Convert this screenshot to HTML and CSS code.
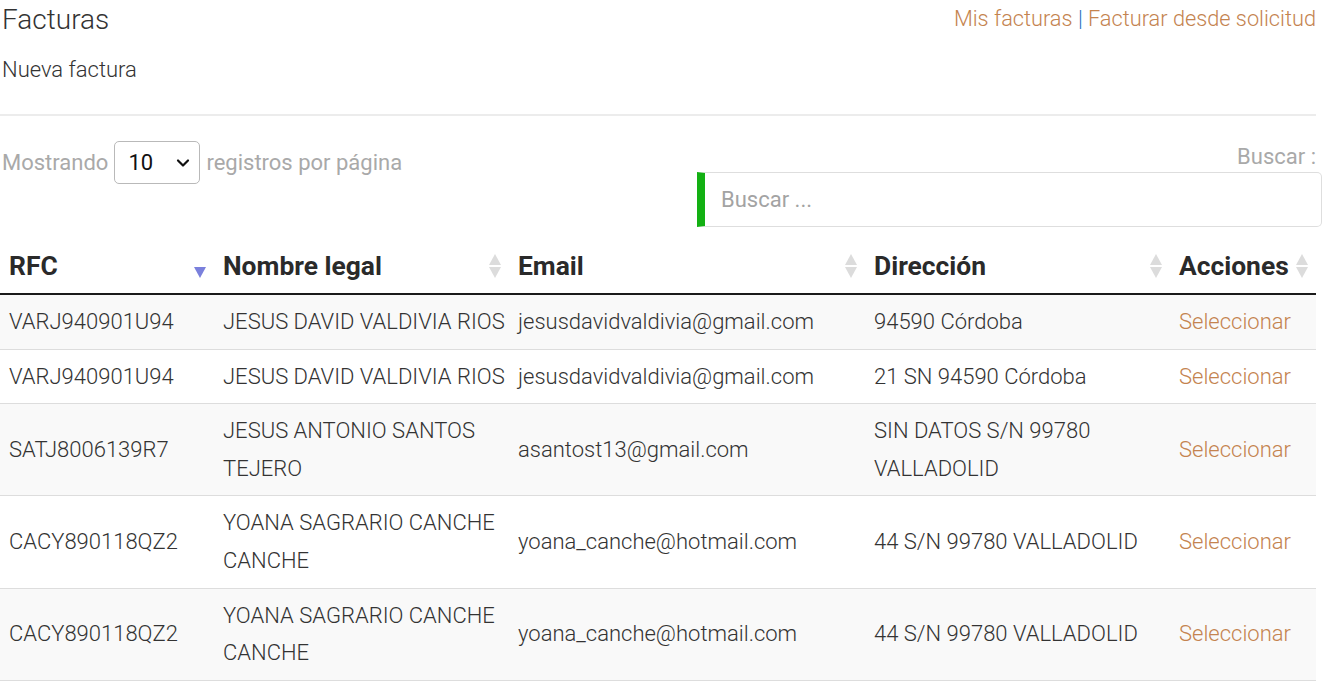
FILE: index.html
```html
<!DOCTYPE html>
<html lang="es">
<head>
<meta charset="utf-8">
<title>Facturas</title>
<link rel="stylesheet" href="styles.css">
</head>
<body>
<div class="page">
  <div class="top">
    <h1 class="title">Facturas</h1>
    <div class="links"><a class="link" href="#">Mis facturas</a> <span class="sep">|</span> <a class="link" href="#">Facturar desde solicitud</a></div>
  </div>
  <div class="sub">Nueva factura</div>
  <hr class="rule">
  <div class="controls">
    <div class="length">Mostrando <span class="select"><span class="select-val">10</span><svg class="chev" width="14" height="10" viewBox="0 0 14 10"><path d="M2 2.5 L7 7.5 L12 2.5" fill="none" stroke="#111" stroke-width="2.2" stroke-linecap="round" stroke-linejoin="round"/></svg></span> registros por página</div>
    <div class="search">
      <label class="search-label" for="q">Buscar :</label>
      <input class="search-input" id="q" type="text" placeholder="Buscar ...">
    </div>
  </div>
  <table class="grid">
    <colgroup>
      <col class="c1"><col class="c2"><col class="c3"><col class="c4"><col class="c5">
    </colgroup>
    <thead>
      <tr>
        <th class="sorted">RFC<span class="arrows"><span class="up"></span><span class="down"></span></span></th>
        <th>Nombre legal<span class="arrows"><span class="up"></span><span class="down"></span></span></th>
        <th>Email<span class="arrows"><span class="up"></span><span class="down"></span></span></th>
        <th>Dirección<span class="arrows"><span class="up"></span><span class="down"></span></span></th>
        <th class="last">Acciones<span class="arrows"><span class="up"></span><span class="down"></span></span></th>
      </tr>
    </thead>
    <tbody>
      <tr>
        <td>VARJ940901U94</td>
        <td>JESUS DAVID VALDIVIA RIOS</td>
        <td>jesusdavidvaldivia@gmail.com</td>
        <td>94590 Córdoba</td>
        <td><a class="link" href="#">Seleccionar</a></td>
      </tr>
      <tr>
        <td>VARJ940901U94</td>
        <td>JESUS DAVID VALDIVIA RIOS</td>
        <td>jesusdavidvaldivia@gmail.com</td>
        <td>21 SN 94590 Córdoba</td>
        <td><a class="link" href="#">Seleccionar</a></td>
      </tr>
      <tr>
        <td>SATJ8006139R7</td>
        <td>JESUS ANTONIO SANTOS TEJERO</td>
        <td>asantost13@gmail.com</td>
        <td>SIN DATOS S/N 99780 VALLADOLID</td>
        <td><a class="link" href="#">Seleccionar</a></td>
      </tr>
      <tr>
        <td>CACY890118QZ2</td>
        <td>YOANA SAGRARIO CANCHE CANCHE</td>
        <td>yoana_canche@hotmail.com</td>
        <td>44 S/N 99780 VALLADOLID</td>
        <td><a class="link" href="#">Seleccionar</a></td>
      </tr>
      <tr>
        <td>CACY890118QZ2</td>
        <td>YOANA SAGRARIO CANCHE CANCHE</td>
        <td>yoana_canche@hotmail.com</td>
        <td>44 S/N 99780 VALLADOLID</td>
        <td><a class="link" href="#">Seleccionar</a></td>
      </tr>
    </tbody>
  </table>
</div>
</body>
</html>
```
FILE: styles.css
```css
html, body {
  margin: 0;
  padding: 0;
  background: #fff;
}
body {
  font-family: Roboto, "Liberation Sans", Arial, sans-serif;
  color: #333;
  overflow: hidden;
}
.page {
  width: 1316px;
}
.top {
  display: flex;
  justify-content: space-between;
  align-items: flex-start;
  padding-left: 2px;
}
.title {
  margin: 0;
  font-size: 28px;
  font-weight: 300;
  line-height: 39px;
  color: #333;
}
.links {
  padding-top: 6px;
  font-size: 21.75px;
  font-weight: 300;
  line-height: 25px;
}
.link {
  color: #c4834f;
  text-decoration: none;
  font-weight: 300;
}
.sep {
  color: #1f6fbf;
}
.sub {
  margin-top: 18px;
  padding-left: 2px;
  font-size: 22px;
  font-weight: 300;
  line-height: 26px;
}
.rule {
  margin: 31px 0 0;
  border: 0;
  border-top: 2px solid #ececec;
  height: 0;
}
.controls {
  margin-top: 25px;
  padding-left: 2px;
  display: flex;
  justify-content: space-between;
  align-items: flex-start;
}
.length {
  display: flex;
  align-items: center;
  gap: 6px;
  font-size: 22px;
  color: #a9a9a9;
  height: 43px;
}
.select {
  box-sizing: border-box;
  width: 86px;
  height: 43px;
  border: 1px solid #b9b9b9;
  border-radius: 5px;
  display: flex;
  align-items: center;
  justify-content: space-between;
  padding: 0 9px 0 13px;
  color: #111;
  font-size: 22px;
  font-weight: 400;
}
.chev {
  display: block;
}
.search {
  display: flex;
  flex-direction: column;
  align-items: flex-end;
  margin-top: 3px;
  margin-right: -6px;
}
.search-label {
  font-size: 22px;
  line-height: 26px;
  color: #a9a9a9;
  margin-right: 6px;
  margin-bottom: 2px;
}
.search-input {
  box-sizing: border-box;
  width: 625px;
  height: 55px;
  border: 1px solid #dedede;
  border-left: 8px solid #13b013;
  border-radius: 0 5px 5px 0;
  padding: 0 0 0 16px;
  font-family: Roboto, "Liberation Sans", Arial, sans-serif;
  font-size: 22px;
  color: #333;
  outline: none;
  background: #fff;
}
.search-input::placeholder {
  color: #a3a3a3;
}
.grid {
  margin-top: 5px;
  width: 1316px;
  border-collapse: collapse;
  table-layout: fixed;
}
.c1 { width: 214px; }
.c2 { width: 295px; }
.c3 { width: 356px; }
.c4 { width: 305px; }
.c5 { width: 146px; }
.grid th {
  position: relative;
  text-align: left;
  font-size: 26.4px;
  font-weight: 700;
  color: #2a2a2a;
  line-height: 44px;
  padding: 12px 24px 5px 9px;
  border-bottom: 2px solid #1a1a1a;
  white-space: nowrap;
}
.grid th.last {
  padding-right: 0;
}
.arrows {
  position: absolute;
  right: 8px;
  top: 22px;
  width: 12px;
  display: flex;
  flex-direction: column;
  gap: 2px;
}
.up {
  width: 0;
  height: 0;
  border-left: 6px solid transparent;
  border-right: 6px solid transparent;
  border-bottom: 11px solid #dcdcdc;
}
.down {
  width: 0;
  height: 0;
  border-left: 6px solid transparent;
  border-right: 6px solid transparent;
  border-top: 11px solid #dcdcdc;
}
.sorted .up {
  border-bottom-color: transparent;
}
.sorted .down {
  border-top-color: #7a80dc;
}
.grid td {
  font-size: 22px;
  font-weight: 300;
  line-height: 37.6px;
  padding: 8px 4px 8px 9px;
  border-top: 1px solid #dddddd;
  color: #333;
  vertical-align: middle;
}
.grid tbody tr:first-child td {
  border-top: 0;
}
.grid tbody tr:nth-child(odd) {
  background: #f9f9f9;
}
.grid tbody tr:last-child td {
  border-bottom: 1px solid #dddddd;
}
```
